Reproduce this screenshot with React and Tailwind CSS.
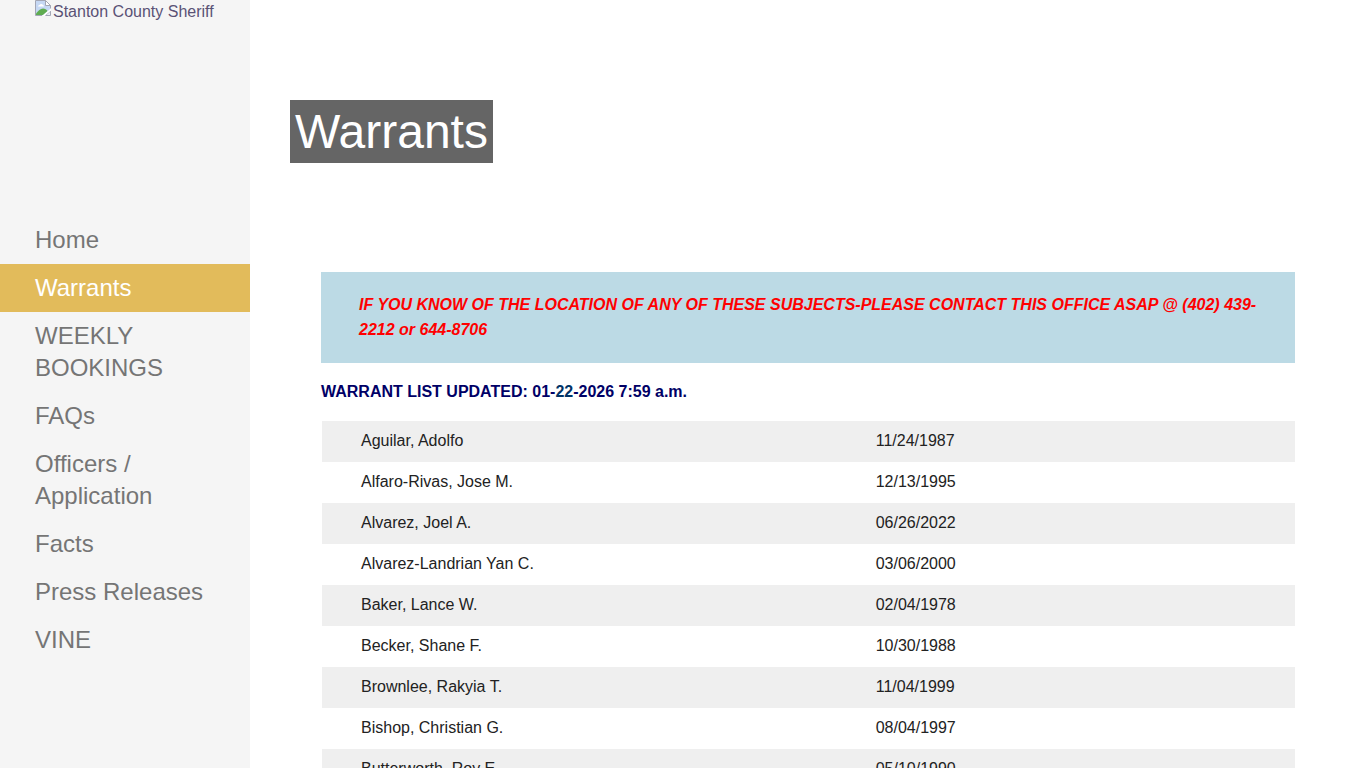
const navItems = [
    'Home',
    'Warrants',
    'WEEKLY BOOKINGS',
    'FAQs',
    'Officers / Application',
    'Facts',
    'Press Releases',
    'VINE',
];

const warrants = [
    { name: 'Aguilar, Adolfo', date: '11/24/1987' },
    { name: 'Alfaro-Rivas, Jose M.', date: '12/13/1995' },
    { name: 'Alvarez, Joel A.', date: '06/26/2022' },
    { name: 'Alvarez-Landrian Yan C.', date: '03/06/2000' },
    { name: 'Baker, Lance W.', date: '02/04/1978' },
    { name: 'Becker, Shane F.', date: '10/30/1988' },
    { name: 'Brownlee, Rakyia T.', date: '11/04/1999' },
    { name: 'Bishop, Christian G.', date: '08/04/1997' },
    { name: 'Butterworth, Roy E.', date: '05/10/1990' },
];

function MissingImageIcon() {
    return (
        <svg className="h-4 w-4 shrink-0" viewBox="0 0 16 16" aria-hidden="true">
            <path d="M0.5 0.5H10.5L15.5 5.5V9L8 15.5H0.5Z" fill="#c6d8f4" />
            <path d="M3 6.5a1.5 1.5 0 0 1 1.5-1.5a2 2 0 0 1 3.5 0a1.5 1.5 0 0 1 1 1.5Z" fill="#fff" />
            <path d="M1 15V13.5C3 11 5.5 8.5 8 8.5C10 8.5 11.5 9.5 12.5 11L8 15Z" fill="#5fac50" />
            <path d="M15.5 8.5V5.5L10.5 0.5H0.5V15.5H7" fill="none" stroke="#a3a6b5" />
            <path d="M10.5 0.5V5.5H15.5Z" fill="#fff" stroke="#a3a6b5" />
            <path d="M10.5 15.5H15.5V11Z" fill="#e9eef8" stroke="#a3a6b5" />
            <path d="M7 16L16 8.5V10.5L9.5 16Z" fill="#fff" />
        </svg>
    );
}

function Sidebar() {
    return (
        <aside className="w-[250px] shrink-0 bg-[#f5f5f5]">
            <div className="h-[216px] px-[35px]">
                <a href="#home" className="flex gap-0.5 text-base text-[#5a5275]">
                    <MissingImageIcon />
                    <span className="whitespace-nowrap">Stanton County Sheriff</span>
                </a>
            </div>
            <nav>
                <ul>
                    {navItems.map(item => (
                        <li key={item}>
                            <a
                                href="#"
                                aria-current={item === 'Warrants' ? 'page' : undefined}
                                className={`block px-[35px] py-2 text-2xl ${
                                    item === 'Warrants'
                                        ? 'bg-[#e2bb5b] text-white'
                                        : 'text-[#757575] hover:text-[#333333]'
                                }`}
                            >
                                {item}
                            </a>
                        </li>
                    ))}
                </ul>
            </nav>
        </aside>
    );
}

function WarrantTable() {
    return (
        <table className="ml-px mt-[17px] w-[calc(100%-1px)] table-fixed text-left leading-[25px] text-[#222222]">
            <colgroup>
                <col className="w-[53%]" />
                <col />
            </colgroup>
            <tbody>
                {warrants.map(warrant => (
                    <tr key={warrant.name} className="odd:bg-[#efefef]">
                        <td className="px-[39px] pt-[7px] pb-[9px]">{warrant.name}</td>
                        <td className="px-[38px] pt-[7px] pb-[9px]">{warrant.date}</td>
                    </tr>
                ))}
            </tbody>
        </table>
    );
}

export default function App() {
    return (
        <div className="flex h-screen bg-white font-['Liberation_Sans',Arial,sans-serif] text-base">
            <Sidebar />
            <main className="min-w-0 flex-1 overflow-y-auto [scrollbar-width:none]">
                <header className="px-10 pt-[100px]">
                    <h1 className="w-fit bg-[#656565] px-[5px] py-1 text-5xl leading-[55px] text-white">
                        Warrants
                    </h1>
                </header>
                <section className="mt-[109px] px-[71px]">
                    <p className="bg-[#bcdae5] px-[38px] pt-5 pb-[21px] font-bold italic leading-[25px] text-[#ff0000]">
                        IF YOU KNOW OF THE LOCATION OF ANY OF THESE SUBJECTS-PLEASE CONTACT THIS OFFICE ASAP @ (402) 439-2212 or 644-8706
                    </p>
                    <p className="mt-4 font-bold leading-[25px] text-[#000066]">
                        WARRANT LIST UPDATED: 01-<span className="text-[#003366]">22</span>-2026 7:59 a.m.
                    </p>
                    <WarrantTable />
                </section>
            </main>
        </div>
    );
}
